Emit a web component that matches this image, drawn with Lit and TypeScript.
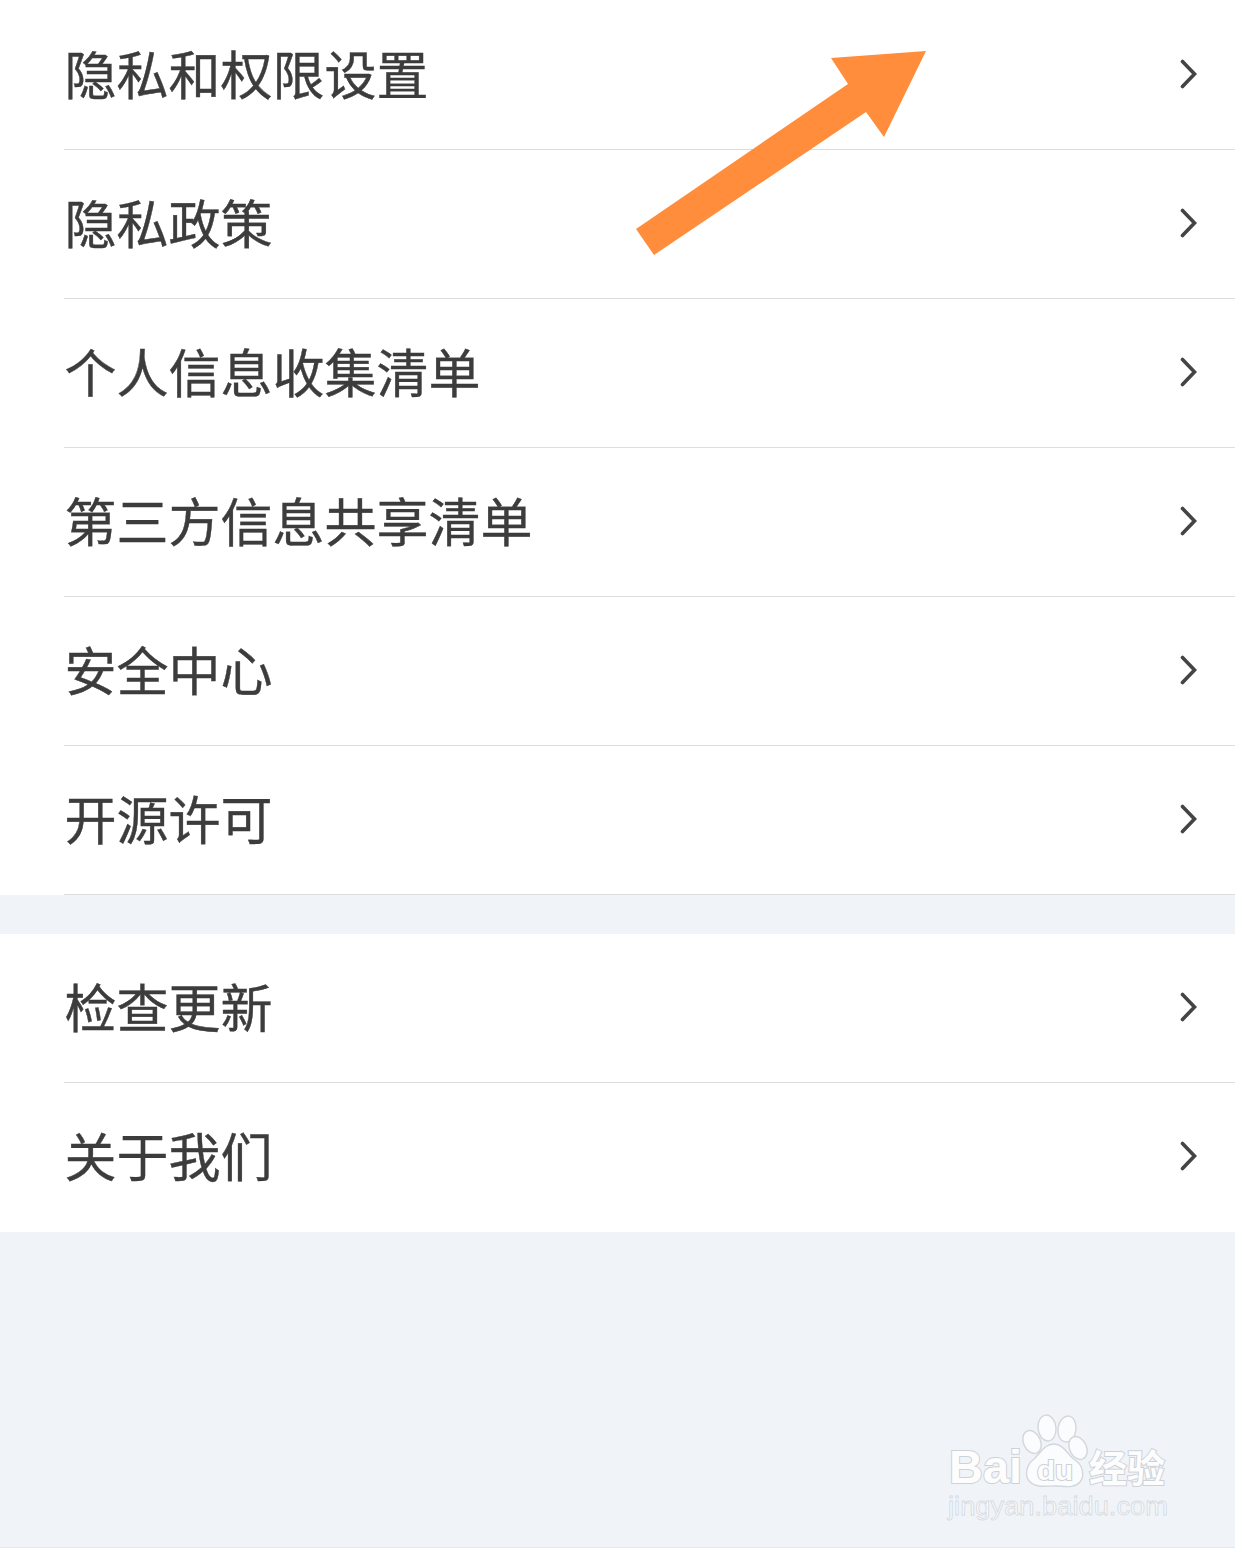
import { LitElement, html, css, svg } from "lit";
import { customElement } from "lit/decorators.js";

const group1 = ["隐私和权限设置", "隐私政策", "个人信息收集清单", "第三方信息共享清单", "安全中心", "开源许可"];
const group2 = ["检查更新", "关于我们"];

@customElement("app-root")
export class AppRoot extends LitElement {
  static styles = css`
    :host {
      display: block;
      position: relative;
      width: 1235px;
      height: 1548px;
      overflow: hidden;
      background: #f0f4f9;
      font-family: "Noto Sans CJK SC", "Liberation Sans", sans-serif;
    }
    .group { background: #fff; }
    .first { padding-top: 1px; border-top: 0; }
    .gap { height: 39px; }
    .row {
      height: 148px;
      box-sizing: content-box;
      display: flex;
      align-items: center;
      justify-content: space-between;
      padding-left: 64.5px;
      padding-right: 38px;
      position: relative;
      border-bottom: 1px solid transparent;
    }
    .row.lined::after {
      content: "";
      position: absolute;
      left: 64px;
      right: 0;
      bottom: -1px;
      height: 1px;
      background: #dedede;
    }
    .label {
      font-size: 52px;
      line-height: 60px;
      color: #3c3c3c;
      position: relative;
      top: -2px;
      -webkit-text-stroke: 0.4px #3c3c3c;
    }
    .chev { width: 18px; height: 30px; display: block; position: relative; top: -1px; }
    .chev path { fill: none; stroke: #444; stroke-width: 3.6; stroke-linecap: round; stroke-linejoin: miter; }
    .overlay { position: absolute; left: 0; top: 0; width: 1235px; height: 1548px; pointer-events: none; }
    .arrow { fill: #ff8d3b; }
    .wm { fill: #fdfdfe; stroke: #cdd2d7; stroke-width: 2; paint-order: stroke; }
    .wm-latin { font-family: "Liberation Sans", sans-serif; font-weight: 700; }
    .wm-cjk { font-family: "Noto Sans CJK SC", sans-serif; font-weight: 700; }
    .wm-url { font-family: "Liberation Sans", sans-serif; fill: #f7f9fb; stroke: #d7dbdf; stroke-width: 0.8; }
    .paw { fill: #fbfcfd; stroke: #d3d7db; stroke-width: 1.4; }
    .edge-line { position: absolute; left: 0; right: 0; bottom: 0; height: 1px; background: #e4e7ea; }
  `;

  private row(label: string, lined: boolean) {
    return html`<div class="row ${lined ? "lined" : ""}">
      <span class="label">${label}</span>
      <svg class="chev" viewBox="0 0 18 30"><path d="M3.5 2.5 L15.5 15 L3.5 27.5" /></svg>
    </div>`;
  }

  render() {
    return html`
      <div class="group first">${group1.map((l) => this.row(l, true))}</div>
      <div class="gap"></div>
      <div class="group">${group2.map((l, i) => this.row(l, i === 0))}</div>
      <div class="edge-line"></div>
      <svg class="overlay" viewBox="0 0 1235 1548">
        <polygon class="arrow" points="926,51 831,58 848,84 636,229 654,255 866,112 884,137" />
        ${svg`
          <ellipse class="paw" cx="1047" cy="1428" rx="9" ry="13" transform="rotate(-6 1047 1428)" />
          <ellipse class="paw" cx="1067" cy="1429" rx="9" ry="13" transform="rotate(8 1067 1429)" />
          <ellipse class="paw" cx="1032" cy="1442" rx="8.5" ry="12" transform="rotate(-25 1032 1442)" />
          <ellipse class="paw" cx="1078" cy="1448" rx="8.5" ry="12" transform="rotate(-25 1078 1448)" />
          <path class="paw" d="M1054 1444 C1044 1444 1040 1454 1034 1459 C1026 1465 1024 1476 1030 1482 C1036 1488 1046 1486 1055 1486 C1064 1486 1074 1489 1080 1482 C1085 1476 1083 1465 1075 1460 C1068 1456 1064 1444 1054 1444 Z" />
          <text class="wm wm-latin" x="949" y="1483" font-size="47" textLength="73" lengthAdjust="spacingAndGlyphs">Bai</text>
          <text class="wm wm-latin" x="1037" y="1480" font-size="27" textLength="36" lengthAdjust="spacingAndGlyphs">du</text>
          <text class="wm wm-cjk" x="1089" y="1482" font-size="38">经验</text>
          <text class="wm-url" x="948" y="1515" font-size="25" textLength="220" lengthAdjust="spacingAndGlyphs">jingyan.baidu.com</text>
        `}
      </svg>
    `;
  }
}
